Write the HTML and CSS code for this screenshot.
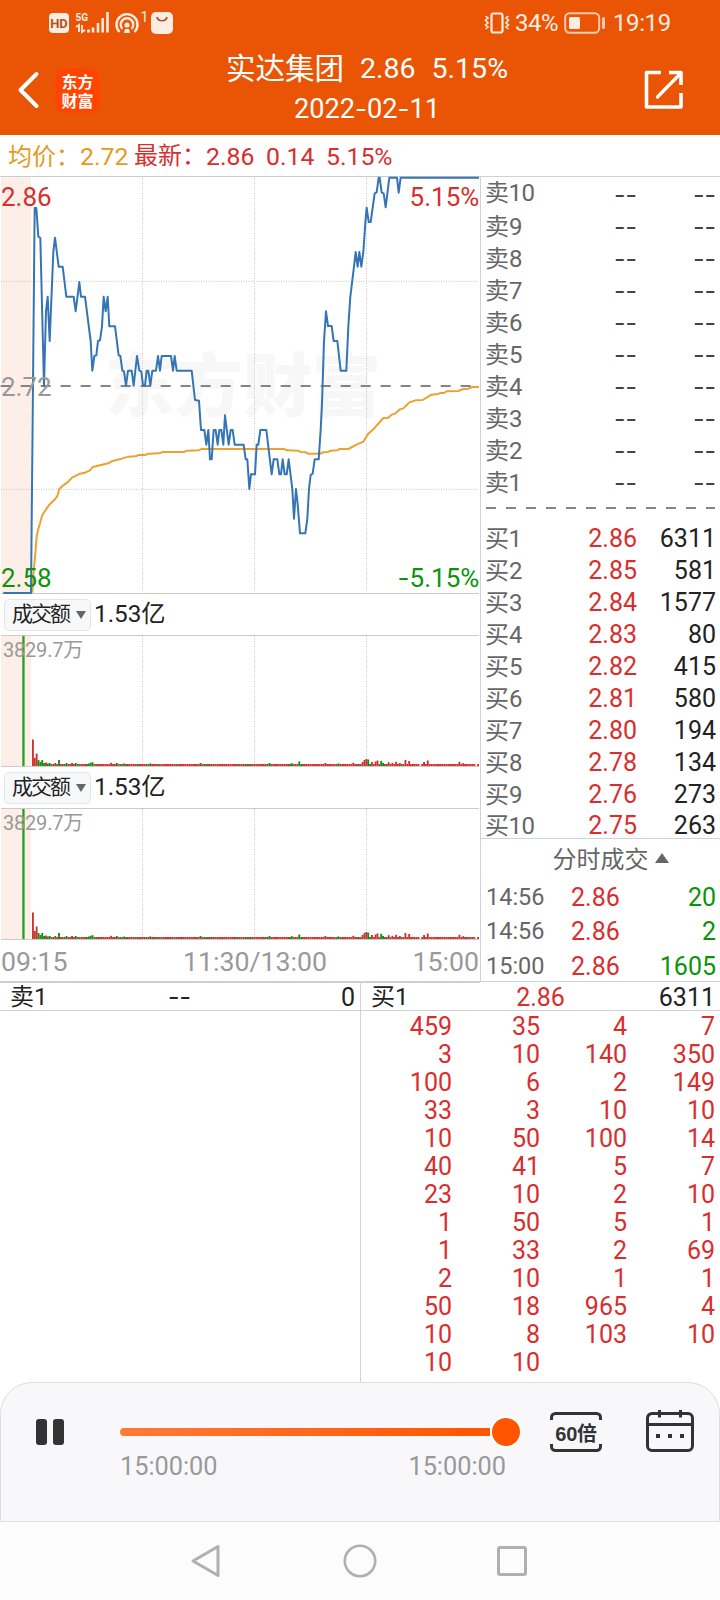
FILE: index.html
```html
<!DOCTYPE html>
<html lang="zh-CN">
<head>
    <meta charset="UTF-8">
    <meta name="viewport" content="width=device-width, initial-scale=1.0">
    <title>实达集团 分时回放</title>
    <link rel="stylesheet" href="styles.css">
</head>
<body>
    <header class="header">
        <div class="status-bar">
            <svg class="status-left" width="130" height="30" viewBox="0 0 130 30">
                <rect x="1" y="5" width="20" height="20" rx="4" fill="#fdece2"/>
                <text class="hd-text" x="11" y="19.5" text-anchor="middle">HD</text>
                <text class="g5-text" x="27.5" y="12.5">5G</text>
                <path d="M28 19l3-2v7M34 17v7l3-2" fill="none" stroke="#fdece2" stroke-width="1.8"/>
                <path d="M40.500 21.500v3M45 19.500v5M50 15v9.500M54.700 10v14.500M59.500 4v20.500" stroke="#fdece2" stroke-width="2.600" fill="none"/>
                <g fill="none" stroke="#fdece2" stroke-width="2.400">
                    <path d="M71.500 24a10.500 10.500 0 1 1 15 0"/>
                    <path d="M74.500 21a6.300 6.300 0 1 1 9 0"/>
                </g>
                <circle cx="79" cy="17" r="2.600" fill="#fdece2"/>
                <path d="M76 25l1-4h4l1 4z" fill="#fdece2"/>
                <text class="hot-text" x="92.5" y="14">1</text>
                <rect x="103" y="4" width="22" height="22" rx="5" fill="#fdece2"/>
                <path d="M109 9c1 5 9 5 10 0" fill="none" stroke="#a3532a" stroke-width="1.600"/>
            </svg>
            <div class="status-right">
                <svg width="26" height="22" viewBox="0 0 26 22" fill="none" stroke="#fdece2">
                    <rect x="7.500" y="1.500" width="11" height="19" rx="2" stroke-width="2.200"/>
                    <path d="M1.500 4l2.500 2-2.500 2 2.500 3-2.500 2 2.500 2-2.500 2M24.500 4l-2.500 2 2.500 2-2.500 3 2.500 2-2.500 2 2.500 2" stroke-width="1.600"/>
                </svg>
                <span class="battery-text">34%</span>
                <svg class="battery" width="42" height="22" viewBox="0 0 42 22">
                    <rect x="1.200" y="1.200" width="34" height="19.600" rx="4.500" fill="none" stroke="#fbc9ad" stroke-width="2"/>
                    <rect x="5" y="5" width="11" height="12" rx="1.500" fill="#fdece2"/>
                    <rect x="38" y="5" width="3" height="12" rx="1.500" fill="#fbc9ad"/>
                </svg>
                <span class="clock">19:19</span>
            </div>
        </div>
        <div class="title-bar">
            <svg class="back" width="24" height="38" viewBox="0 0 24 38">
                <path d="M20.500 3L4.500 19l16 16" fill="none" stroke="#fff" stroke-width="4" stroke-linecap="round" stroke-linejoin="round"/>
            </svg>
            <div class="app-logo">东方<br>财富</div>
            <div class="title">
                <div class="title-main"><span class="stock-name">实达集团</span><span>2.86</span><span>5.15%</span></div>
                <div class="title-date">2022<span class="dash">-</span>02<span class="dash">-</span>11</div>
            </div>
            <svg class="share" width="40" height="40" viewBox="0 0 40 40" fill="none" stroke="#fff" stroke-width="3.600" stroke-linejoin="round">
                <path d="M17 2.500H2.500V37H37V23"/>
                <path d="M25 2.500H37V15"/>
                <path d="M36 4L13.500 27" stroke-width="3.300" stroke-linecap="round"/>
            </svg>
        </div>
    </header>

    <div class="info-row">
        <span class="avg">均价：<span>2.72</span></span>
        <span class="latest">最新：<span>2.86</span><span>0.14</span><span>5.15%</span></span>
    </div>

    <main class="main">
        <section class="charts">
            <svg class="price-chart" width="480" height="418" viewBox="0 18 1440 1254">
                <text class="watermark" x="315" y="724" textLength="828">东方财富</text>
                <rect x="3" y="22" width="90" height="1248" fill="#fdeee8"/>
                <g class="grid-line">
                    <path d="M3 334H1434M3 958H1434"/>
                    <path d="M427.500 24V1268M763.500 24V1268M1099.500 24V1268"/>
                </g>
                <path d="M0 19.500H1440M3 1270.500H1437" stroke="#cbcbcb" stroke-width="3"/>
                <path d="M2 648H1416" stroke="#848484" stroke-width="6" stroke-dasharray="30 30"/>
                <polyline class="avg-line" points="97,1268 100,1215 106,1150 110,1100 114,1080 120,1060 126,1038 134,1024 148,1004 165,988 172,978 178,957 190,946 205,935 216,923 240,911 255,908 270,901 278,891 300,886 325,880 335,874 365,866 385,860 408,859 415,855 436,855 445,851 478,850 488,846 552,846 560,842 597,841 604,837 853,837 860,841 895,842 902,846 917,847 924,851 962,851 968,847 985,846 991,842 1012,841 1018,837 1045,837 1065,826 1090,815 1104,792 1120,778 1150,744 1165,743 1175,734 1185,731 1200,718 1210,715 1228,697 1246,691 1268,690 1280,683 1294,674 1315,672 1320,669 1332,669 1340,664 1375,663 1390,657 1405,656 1417,651 1437,651"/>
                <polyline class="price-line" points="10,1269 93,1269 104,114 109,114 115,200 121,204 132,648 138,424 143,380 149,513 160,245 165,203 176,290 188,290 199,380 221,380 227,424 238,336 243,380 255,380 272,513 277,602 283,558 289,556 294,513 300,511 306,469 311,380 317,424 323,380 328,469 345,469 356,556 361,558 367,602 372,604 378,647 384,602 395,602 401,647 411,558 418,602 424,604 429,647 435,647 440,602 445,602 451,647 457,602 468,602 474,558 480,602 485,558 513,558 519,602 524,558 530,602 575,602 585,690 597,692 603,780 613,780 619,824 625,780 630,868 635,868 641,780 647,780 653,824 658,780 664,780 670,824 675,736 686,824 692,780 698,780 704,824 731,824 737,868 742,868 748,957 753,913 765,913 770,824 775,824 781,780 799,780 815,913 821,868 832,868 838,913 843,913 848,868 854,913 860,913 866,868 877,957 882,1046 888,957 893,1002 900,1090 916,1090 922,1046 927,957 932,915 938,911 944,868 956,868 962,780 966,700 972,513 978,424 984,468 995,468 1001,513 1012,513 1022,602 1039,602 1045,469 1051,380 1062,290 1067,246 1073,290 1078,246 1084,290 1090,246 1096,158 1100,113 1106,156 1112,156 1124,70 1130,67 1136,23 1139,23 1145,68 1151,70 1157,112 1168,23 1191,23 1196,68 1202,23 1437,23"/>
                <g class="price-label">
                    <text x="3" y="107" fill="#d82e2e">2.86</text>
                    <text x="3" y="678" fill="#999">2.72</text>
                    <text x="3" y="1250" fill="#0c930c">2.58</text>
                    <text x="1438" y="107" fill="#d82e2e" text-anchor="end">5.15%</text>
                    <text x="1438" y="1250" fill="#0c930c" text-anchor="end"><tspan class="dash">-</tspan>5.15%</text>
                </g>
            </svg>
            <div class="indicator">
                <div class="chip">成交额<i class="caret"></i></div>
                <span>1.53亿</span>
            </div>
            <svg class="volume-chart" width="480" height="132" viewBox="0 0 480 132"></svg>
            <div class="indicator">
                <div class="chip">成交额<i class="caret"></i></div>
                <span>1.53亿</span>
            </div>
            <svg class="volume-chart" width="480" height="132" viewBox="0 0 480 132"></svg>
            <div class="time-axis"><span>09:15</span><span>11:30/13:00</span><span>15:00</span></div>
        </section>

        <aside class="book">
            <div class="sell-list" id="sellList"></div>
            <svg class="book-split" width="234" height="24" viewBox="0 0 234 24">
                <path d="M0 9H229" stroke="#848484" stroke-width="2" stroke-dasharray="10 10"/>
            </svg>
            <div class="buy-list" id="buyList"></div>
            <div class="deals">
                <div class="deals-title">分时成交<i class="caret-up"></i></div>
                <div class="deal"><span>14:56</span><span class="red">2.86</span><span class="green">20</span></div>
                <div class="deal"><span>14:56</span><span class="red">2.86</span><span class="green">2</span></div>
                <div class="deal"><span>15:00</span><span class="red">2.86</span><span class="green">1605</span></div>
            </div>
        </aside>
    </main>

    <section class="queue">
        <div class="queue-side">
            <div class="queue-head"><span>卖1</span><span class="dash">--</span><span>0</span></div>
        </div>
        <div class="queue-side">
            <div class="queue-head"><span>买1</span><span class="red">2.86</span><span>6311</span></div>
            <div class="queue-grid" id="queueGrid"></div>
        </div>
    </section>

    <section class="player">
        <div class="pause"><i></i><i></i></div>
        <div class="progress">
            <div class="track"><i class="thumb"></i></div>
            <div class="progress-time"><span>15:00:00</span><span>15:00:00</span></div>
        </div>
        <div class="speed">
            <svg width="52" height="40" viewBox="0 0 52 40" fill="none" stroke="#333" stroke-width="3">
                <path d="M1.500 8V5.500a4 4 0 0 1 4-4H46.500a4 4 0 0 1 4 4V8M1.500 32v2.500a4 4 0 0 0 4 4H46.500a4 4 0 0 0 4-4V32"/>
            </svg>
            <span>60倍</span>
        </div>
        <svg class="calendar" width="48" height="42" viewBox="0 0 48 42" fill="none" stroke="#333" stroke-width="3">
            <rect x="1.500" y="3.500" width="45" height="37" rx="4.500"/>
            <path d="M2 14.500H46M13.500 0V7.500M34.500 0V7.500"/>
            <path d="M10 26h4M22 26h4M34 26h4" stroke-width="4"/>
        </svg>
    </section>

    <nav class="nav-bar">
        <svg width="32" height="36" viewBox="0 0 32 36"><path d="M28 3.500V32.500L3 18z" fill="none" stroke="#b0b0b0" stroke-width="3" stroke-linejoin="round"/></svg>
        <svg width="36" height="36" viewBox="0 0 36 36"><circle cx="18" cy="18" r="15.200" fill="none" stroke="#b0b0b0" stroke-width="2.600"/></svg>
        <svg width="30" height="30" viewBox="0 0 30 30"><rect x="1.500" y="1.500" width="27" height="27" rx="1.500" fill="none" stroke="#b0b0b0" stroke-width="3"/></svg>
    </nav>

    <script src="script.js"></script>
</body>
</html>
```
FILE: styles.css
```css
* {
    box-sizing: border-box;
}
body {
    margin: 0;
    width: 720px;
    height: 1600px;
    display: flex;
    flex-direction: column;
    overflow: hidden;
    background-color: #fff;
    color: #222;
    font-family: Roboto, "Noto Sans CJK SC", sans-serif;
    font-size: 25px;
    line-height: 1;
}
svg {
    display: block;
    flex: none;
}
span {
    white-space: nowrap;
}
.dash {
    font-family: Inter, sans-serif;
}
.red {
    color: #d82e2e;
}
.green {
    color: #0c930c;
}

/* header */
.header {
    height: 135px;
    background-color: #e95504;
    color: #fff;
}
.status-bar {
    height: 46px;
    padding: 8px 48px 0 48px;
    display: flex;
    justify-content: space-between;
    color: #fdece2;
}
.hd-text {
    font-size: 13px;
    font-weight: 700;
    fill: #b4521f;
}
.g5-text {
    font-size: 10px;
    font-weight: 700;
    fill: #fdece2;
}
.hot-text {
    font-size: 14px;
    fill: #fdece2;
}
.status-right {
    height: 30px;
    display: flex;
    align-items: center;
}
.battery-text {
    margin-left: 5px;
    width: 48px;
    font-size: 24px;
    letter-spacing: -.5px;
}
.battery {
    margin-left: 1px;
}
.clock {
    margin-left: 7px;
    font-size: 24px;
    width: 59px;
    letter-spacing: -.4px;
}
.title-bar {
    height: 89px;
    display: flex;
    padding-left: 16px;
}
.back {
    margin-top: 25px;
}
.app-logo {
    width: 45px;
    height: 45px;
    margin: 22px 0 0 15px;
    padding-top: 4px;
    border-radius: 10px;
    background-color: #ff4500;
    font-family: "Noto Sans CJK SC", sans-serif;
    font-size: 16px;
    font-weight: 700;
    line-height: 19px;
    text-align: center;
}
.title {
    width: 520px;
    margin-left: 7px;
    display: flex;
    flex-direction: column;
    align-items: center;
}
.title-main {
    margin-top: 5px;
    display: flex;
    gap: 16px;
    font-size: 28.500px;
    line-height: 36px;
}
.stock-name {
    font-size: 29.500px;
}
.title-date {
    margin-top: 4px;
    font-size: 27.200px;
    line-height: 36px;
}
.title-date .dash {
    font-size: 26px;
}
.share {
    margin: 24px 0 0 17px;
}

.info-row {
    height: 41px;
    padding: 2px 0 0 8px;
    display: flex;
    align-items: center;
    line-height: 39px;
    font-size: 24px;
}
.avg {
    width: 126px;
    color: #e59a1c;
}
.latest {
    display: flex;
    color: #d82e2e;
}
.info-row span span {
    width: 60px;
    font-size: 24.800px;
}

/* charts */
.main {
    display: flex;
    height: 806px;
    border-bottom: 1px solid #d0d3d6;
}
.charts {
    width: 480px;
}
.grid-line {
    stroke: #c4c4c4;
    stroke-width: 3;
    stroke-dasharray: 3 4.500;
    fill: none;
}
.volume-chart .grid-line {
    stroke-width: 1;
    stroke-dasharray: 1 1.500;
}
.watermark {
    font-family: "Noto Sans CJK SC", sans-serif;
    font-size: 207px;
    font-weight: 900;
    fill: #f7f7f7;
}
.avg-line, .price-line {
    fill: none;
    stroke-width: 6;
    stroke-linejoin: round;
}
.avg-line {
    stroke: #eba22f;
}
.price-line {
    stroke: #3575b5;
}
.price-label {
    font-size: 78px;
}
.price-label .dash {
    font-size: 78px;
}
.indicator {
    height: 41px;
    padding-left: 4px;
    display: flex;
    align-items: center;
    gap: 3px;
    font-size: 24.300px;
}
.chip {
    width: 87px;
    height: 32px;
    padding-left: 7px;
    display: flex;
    align-items: center;
    border: 1px solid #e4e5e8;
    border-radius: 5px;
    background-color: #f7f8fa;
    font-size: 21px;
    letter-spacing: -2px;
}
.caret {
    margin-left: 7px;
    border: 5px solid transparent;
    border-top: 8px solid #666;
    border-bottom: 0;
}
.volume-label {
    font-size: 20px;
    fill: #999;
    letter-spacing: -.2px;
}
.time-axis {
    height: 43px;
    padding: 2px 1px 0;
    display: grid;
    grid-template-columns: 1fr 146px 1fr;
    align-items: center;
    border-bottom: 1px solid #cbcbcb;
    color: #999;
    font-size: 26.700px;
}
.time-axis span:nth-child(2) {
    margin-left: 16px;
}
.time-axis span:last-child {
    text-align: right;
}

/* order book */
.book {
    width: 240px;
    border-left: 1px solid #d0d3d6;
    border-top: 1px solid #d0d3d6;
    color: #666;
}
.sell-list {
    padding-top: 2px;
}
.row {
    height: 32px;
    padding: 0 4px;
    display: grid;
    grid-template-columns: 91px 61px 1fr;
    align-items: center;
    line-height: 32px;
}
.row span:first-child {
    font-size: 24px;
}
.sell-list .row:first-child span:first-child {
    height: 32px;
    line-height: 29px;
}
.row:first-child span:first-child, .row:last-child span:first-child {
    letter-spacing: -.5px;
}
.row span:nth-child(n+2) {
    text-align: right;
}
.row .dash {
    font-size: 25px;
    color: #444;
}
.row .amount {
    color: #222;
}
.book-split {
    margin-left: 5px;
}
.buy-list {
    height: 315px;
}
.buy-list .row:last-child {
    line-height: 30px;
    height: 30px;
}
.deals {
    border-top: 1px solid #d0d3d6;
}
.deals-title {
    height: 41px;
    padding-left: 20px;
    display: flex;
    align-items: center;
    justify-content: center;
    gap: 6px;
    font-size: 24px;
}
.caret-up {
    margin-top: -4px;
    border: 7px solid transparent;
    border-bottom: 10px solid #666;
    border-top: 0;
}
.deal {
    height: 34.500px;
    padding: 0 4px 0 5px;
    display: grid;
    grid-template-columns: 85px 60px 1fr;
    align-items: center;
}
.deal span:first-child {
    font-size: 23.500px;
}
.deal .green {
    text-align: right;
}

/* order queue */
.queue {
    height: 400px;
    display: grid;
    grid-template-columns: 360px 360px;
}
.queue-side + .queue-side {
    border-left: 1px solid #d0d3d6;
}
.queue-head {
    height: 29px;
    padding: 3px 5px 0 10px;
    display: grid;
    grid-template-columns: 115px 109px 1fr;
    align-items: center;
    border-bottom: 1px solid #d0d3d6;
    line-height: 25px;
}
.queue-head span:first-child {
    font-size: 24px;
}
.queue-head span:nth-child(2) {
    text-align: center;
}
.queue-head span:nth-child(3) {
    text-align: right;
}
.queue-grid {
    padding-right: 5px;
    display: grid;
    grid-template-columns: 91px 88px 87px 88px;
    grid-auto-rows: 28px;
    color: #d82e2e;
    line-height: 31px;
    text-align: right;
}

/* replay player */
.player {
    height: 140px;
    padding: 27px 25px 0 35px;
    display: flex;
    align-items: flex-start;
    border: 1px solid #dedede;
    border-radius: 32px 32px 0 0;
    background-color: #f8f8fb;
}
.pause {
    display: flex;
    gap: 6px;
    margin-top: 9px;
}
.pause i {
    width: 11px;
    height: 26px;
    border-radius: 3px;
    background-color: #333;
}
.progress {
    width: 386px;
    margin: 18px 0 0 56px;
}
.track {
    height: 8px;
    width: 370px;
    border-radius: 4px 0 0 4px;
    background: linear-gradient(to right, #ff7a38, #ff5500);
    position: relative;
}
.thumb {
    position: absolute;
    left: 370px;
    top: -12px;
    width: 32px;
    height: 32px;
    border: 2px solid #fff;
    border-radius: 50%;
    background-color: #ff5500;
}
.progress-time {
    margin-top: 18px;
    display: flex;
    justify-content: space-between;
    color: #999;
    font-size: 25.300px;
}
.speed {
    width: 52px;
    height: 40px;
    margin: 2px 44px 0 44px;
    display: grid;
    place-items: center;
    font-family: "Liberation Sans", "Noto Sans CJK SC", sans-serif;
    font-size: 20px;
    font-weight: 700;
    color: #333;
}
.speed > * {
    grid-area: 1 / 1;
}
.speed span {
    padding-top: 3px;
    letter-spacing: -.3px;
}
.nav-bar {
    height: 78px;
    padding-left: 190px;
    display: flex;
    align-items: center;
    background-color: #fcfcfc;
}
.nav-bar svg + svg {
    margin-left: 119.500px;
}
```
FILE: script.js
```js
const buys = [
    ['2.86', 6311], ['2.85', 581], ['2.84', 1577], ['2.83', 80], ['2.82', 415],
    ['2.81', 580], ['2.80', 194], ['2.78', 134], ['2.76', 273], ['2.75', 263]
];
const queue = [
    [459, 35, 4, 7], [3, 10, 140, 350], [100, 6, 2, 149], [33, 3, 10, 10],
    [10, 50, 100, 14], [40, 41, 5, 7], [23, 10, 2, 10], [1, 50, 5, 1],
    [1, 33, 2, 69], [2, 10, 1, 1], [50, 18, 965, 4], [10, 8, 103, 10], [10, 10]
];

let sellHtml = '';
for (let i = 10; i >= 1; i--) {
    sellHtml += `<div class="row"><span>卖${i}</span><span class="dash">--</span><span class="dash">--</span></div>`;
}
document.getElementById('sellList').innerHTML = sellHtml;

document.getElementById('buyList').innerHTML = buys.map((b, i) =>
    `<div class="row"><span>买${i + 1}</span><span class="red">${b[0]}</span><span class="amount">${b[1]}</span></div>`
).join('');

document.getElementById('queueGrid').innerHTML = queue.map(r =>
    r.map(n => `<span>${n}</span>`).join('')
).join('');

// minute index -> [height, is green]; all other minutes use the minimum height
const peaks = {
    0: [26.5], 1: [8], 2: [12.5], 3: [6, 1], 4: [4, 1], 5: [6, 1], 6: [3, 1], 7: [3.5], 8: [2.5, 1], 9: [3, 1],
    12: [3], 14: [6, 1], 18: [3, 1], 21: [3], 23: [3, 1], 30: [2.5, 1], 31: [3.2, 1], 32: [3.8, 1],
    42: [3.2], 45: [3, 1], 49: [2.5, 1], 63: [2.6, 1], 90: [3, 1], 127: [3, 1], 139: [2.8, 1], 143: [4.5, 1],
    157: [3], 164: [2.6, 1], 172: [3.2], 177: [4], 178: [6], 179: [7], 180: [6.5, 1], 182: [4], 184: [4.5],
    185: [5.5], 187: [5.2, 1], 188: [3, 1], 191: [3.8], 193: [3.2], 195: [4.2], 197: [3], 200: [6], 202: [5],
    208: [0], 210: [4], 212: [5.5], 229: [4.2], 231: [2.8], 238: [0]
};
const greens = [11, 17, 24, 29, 34, 47, 51, 56, 61, 68, 77, 93, 96, 111, 115, 117, 126, 138, 144, 163, 175, 181, 190, 198];

function drawVolume(svg) {
    let html = '<rect x="1" y="0" width="30" height="131" fill="#fdeee8"/>' +
        '<path class="grid-line" d="M142.5 1V130M254.5 1V130M366.5 1V130"/>' +
        '<path d="M1 .5H479M1 131.5H479" stroke="#cbcbcb"/>' +
        '<rect x="22.300" y="1" width="2.300" height="130" fill="#22a022"/>';
    for (let i = 0; i < 240; i++) {
        const p = peaks[i] || [2, greens.includes(i)];
        html += `<rect x="${(32 + i * 1.8625).toFixed(2)}" y="${131 - p[0]}" width="1.86" height="${p[0]}" fill="${p[1] ? '#128f12' : '#d23030'}"/>`;
    }
    html += '<text class="volume-label" x="3" y="22">3829.7万</text>';
    svg.innerHTML = html;
}
document.querySelectorAll('.volume-chart').forEach(drawVolume);
```
